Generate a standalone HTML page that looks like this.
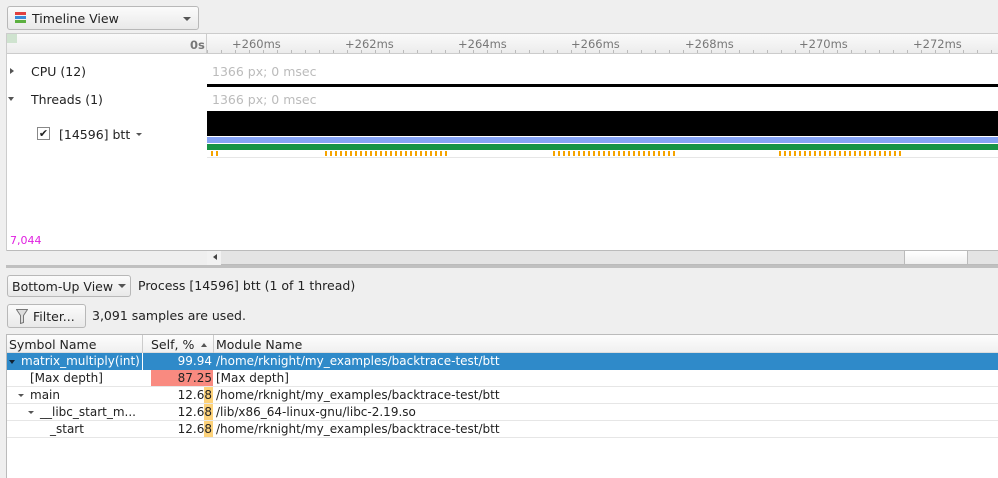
<!DOCTYPE html>
<html><head><style>
*{box-sizing:border-box;margin:0;padding:0}
body{width:998px;height:478px;background:#efefef;font-family:"DejaVu Sans","Liberation Sans",sans-serif;font-size:12px;color:#222;position:relative;overflow:hidden}
.a{position:absolute}
.btn{position:absolute;border:1px solid #b8b8b8;border-radius:3px;background:linear-gradient(#fbfbfb,#e9e9e9)}
.tick{position:absolute;top:44px;color:#777;font-size:11.5px}
.row{position:absolute;left:7px;right:0;height:17px;border-bottom:1px solid #e6e6e6;line-height:16px;font-size:12px}
.or{position:absolute;height:5px;top:151px;background:repeating-linear-gradient(90deg,#f5a400 0 2px,transparent 2px 5px)}
</style></head><body>
<div class="btn" style="left:7px;top:6px;width:192px;height:24px">
 <div class="a" style="left:7px;top:5px;width:11px;height:3px;background:#e04040"></div>
 <div class="a" style="left:7px;top:9px;width:11px;height:3px;background:#3a8ad8"></div>
 <div class="a" style="left:7px;top:13px;width:11px;height:3px;background:#5cb040"></div>
 <div class="a" style="left:24px;top:4px;font-size:12.5px">Timeline View</div>
 <div class="a" style="left:175px;top:10px;border:4px solid transparent;border-top:4px solid #555"></div>
</div>
<div class="a" style="left:6px;top:33px;width:992px;height:218px;background:#fff;border-left:1px solid #ccc;border-top:1px solid #ccc"></div>
<div class="a" style="left:7px;top:34px;width:991px;height:20px;background:linear-gradient(#fafafa,#ececec);border-bottom:1px solid #ccc"></div>
<div class="a" style="left:7px;top:34px;width:10px;height:9px;background:#cfe3cf"></div>
<div class="a" style="left:206px;top:34px;width:1px;height:20px;background:#ccc"></div>
<div class="a" style="left:190px;top:38px;color:#777;font-weight:bold;font-size:11.5px">0s</div>
<div class="a" style="left:207px;top:50px;width:791px;height:3px;background:repeating-linear-gradient(90deg,#bbb 0 1px,transparent 1px 14px)"></div>
<div class="tick" style="left:232px;top:37px">+260ms</div>
<div class="tick" style="left:345px;top:37px">+262ms</div>
<div class="tick" style="left:458px;top:37px">+264ms</div>
<div class="tick" style="left:571px;top:37px">+266ms</div>
<div class="tick" style="left:685px;top:37px">+268ms</div>
<div class="tick" style="left:799px;top:37px">+270ms</div>
<div class="tick" style="left:913px;top:37px">+272ms</div>
<div class="a" style="left:10px;top:68px;border:3.5px solid transparent;border-left:4px solid #555"></div>
<div class="a" style="left:31px;top:64px;font-size:12.5px">CPU (12)</div>
<div class="a" style="left:212px;top:64px;color:#bbb;font-size:12.5px">1366 px; 0 msec</div>
<div class="a" style="left:207px;top:84px;width:791px;height:3px;background:#000"></div>
<div class="a" style="left:8px;top:97px;border:3.5px solid transparent;border-top:4px solid #555"></div>
<div class="a" style="left:31px;top:92px;font-size:12.5px">Threads (1)</div>
<div class="a" style="left:212px;top:92px;color:#bbb;font-size:12.5px">1366 px; 0 msec</div>
<div class="a" style="left:37px;top:127px;width:13px;height:13px;border:1px solid #888;background:#fff;font-size:11px;line-height:11px;text-align:center;font-weight:bold">✔</div>
<div class="a" style="left:59px;top:127px;font-size:12.5px">[14596] btt</div>
<div class="a" style="left:136px;top:133px;border:3px solid transparent;border-top:3px solid #555"></div>
<div class="a" style="left:207px;top:111px;width:791px;height:25px;background:#000"></div>
<div class="a" style="left:207px;top:137px;width:791px;height:6px;background:#85a3f5"></div>
<div class="a" style="left:207px;top:144px;width:791px;height:6px;background:#169346"></div>
<div class="or" style="left:211px;width:7px"></div>
<div class="or" style="left:325px;width:124px"></div>
<div class="or" style="left:553px;width:124px"></div>
<div class="or" style="left:779px;width:124px"></div>
<div class="a" style="left:207px;top:157px;width:791px;height:1px;background:#e6e6e6"></div>
<div class="a" style="left:10px;top:234px;color:#e020e0;font-size:11px">7,044</div>
<div class="a" style="left:7px;top:250px;width:991px;height:1px;background:#bbb"></div>
<div class="a" style="left:207px;top:251px;width:791px;height:14px;background:#e4e4e4;border-bottom:1px solid #bbb"></div>
<div class="a" style="left:207px;top:251px;width:14px;height:14px;background:#f2f2f2"></div>
<div class="a" style="left:210px;top:254px;border:3.5px solid transparent;border-right:4px solid #444"></div>
<div class="a" style="left:904px;top:251px;width:64px;height:14px;background:linear-gradient(#fff,#f0f0f0);border:1px solid #bbb;border-top:none"></div>
<div class="a" style="left:6px;top:265px;width:992px;height:3px;background:#c0c0c0"></div>
<div class="btn" style="left:7px;top:275px;width:124px;height:22px">
 <div class="a" style="left:4px;top:3px;font-size:12.5px">Bottom-Up View</div>
 <div class="a" style="left:110px;top:8px;border:4px solid transparent;border-top:4px solid #555"></div>
</div>
<div class="a" style="left:138px;top:278px;font-size:12.5px">Process [14596] btt (1 of 1 thread)</div>
<div class="btn" style="left:7px;top:304px;width:79px;height:24px">
 <svg class="a" style="left:8px;top:4px" width="12" height="15" viewBox="0 0 12 15"><path d="M0.5 0.5h11l-4 6v7l-3 1v-8z" fill="#ddd" stroke="#777"/></svg>
 <div class="a" style="left:25px;top:4px;font-size:12.5px">Filter...</div>
</div>
<div class="a" style="left:92px;top:308px;font-size:12.5px">3,091 samples are used.</div>
<div class="a" style="left:6px;top:334px;width:992px;height:144px;background:#fff;border-left:1px solid #bbb;border-top:1px solid #bbb"></div>
<div class="a" style="left:7px;top:335px;width:991px;height:18px;background:linear-gradient(#fdfdfd,#f0f0f0);border-bottom:1px solid #ddd"></div>
<div class="a" style="left:142px;top:335px;width:1px;height:18px;background:#ccc"></div>
<div class="a" style="left:213px;top:335px;width:1px;height:18px;background:#ccc"></div>
<div class="a" style="left:9px;top:337px;font-size:12.5px">Symbol Name</div>
<div class="a" style="left:151px;top:337px;font-size:12.5px">Self, %</div>
<div class="a" style="left:201px;top:340px;border:3.5px solid transparent;border-bottom:4px solid #555"></div>
<div class="a" style="left:216px;top:337px;font-size:12.5px">Module Name</div>
<div class="row" style="top:353px;background:#2f8ac9;color:#fff;border:none">
 <div class="a" style="left:2px;top:7px;border:3.5px solid transparent;border-top:4px solid #123"></div>
 <div class="a" style="left:14px;top:0">matrix_multiply(int)</div>
 <div class="a" style="left:135px;top:0;width:1px;height:17px;background:#fff"></div>
 <div class="a" style="left:150px;top:0;width:55px;text-align:right">99.94</div>
 <div class="a" style="left:209px;top:0">/home/rknight/my_examples/backtrace-test/btt</div>
</div>
<div class="row" style="top:370px">
 <div class="a" style="left:23px">[Max depth]</div>
 <div class="a" style="left:144px;top:0;width:62px;height:16px;background:#f98a80"></div>
 <div class="a" style="left:150px;width:55px;text-align:right">87.25</div>
 <div class="a" style="left:209px">[Max depth]</div>
</div>
<div class="row" style="top:387px">
 <div class="a" style="left:11px;top:7px;border:3px solid transparent;border-top:3.5px solid #555"></div>
 <div class="a" style="left:23px">main</div>
 <div class="a" style="left:197px;top:0;width:9px;height:16px;background:#fdd27a"></div>
 <div class="a" style="left:150px;width:55px;text-align:right">12.68</div>
 <div class="a" style="left:209px">/home/rknight/my_examples/backtrace-test/btt</div>
</div>
<div class="row" style="top:404px">
 <div class="a" style="left:21px;top:7px;border:3px solid transparent;border-top:3.5px solid #555"></div>
 <div class="a" style="left:33px">__libc_start_m...</div>
 <div class="a" style="left:197px;top:0;width:9px;height:16px;background:#fdd27a"></div>
 <div class="a" style="left:150px;width:55px;text-align:right">12.68</div>
 <div class="a" style="left:209px">/lib/x86_64-linux-gnu/libc-2.19.so</div>
</div>
<div class="row" style="top:421px">
 <div class="a" style="left:43px">_start</div>
 <div class="a" style="left:197px;top:0;width:9px;height:16px;background:#fdd27a"></div>
 <div class="a" style="left:150px;width:55px;text-align:right">12.68</div>
 <div class="a" style="left:209px">/home/rknight/my_examples/backtrace-test/btt</div>
</div>
</body></html>
